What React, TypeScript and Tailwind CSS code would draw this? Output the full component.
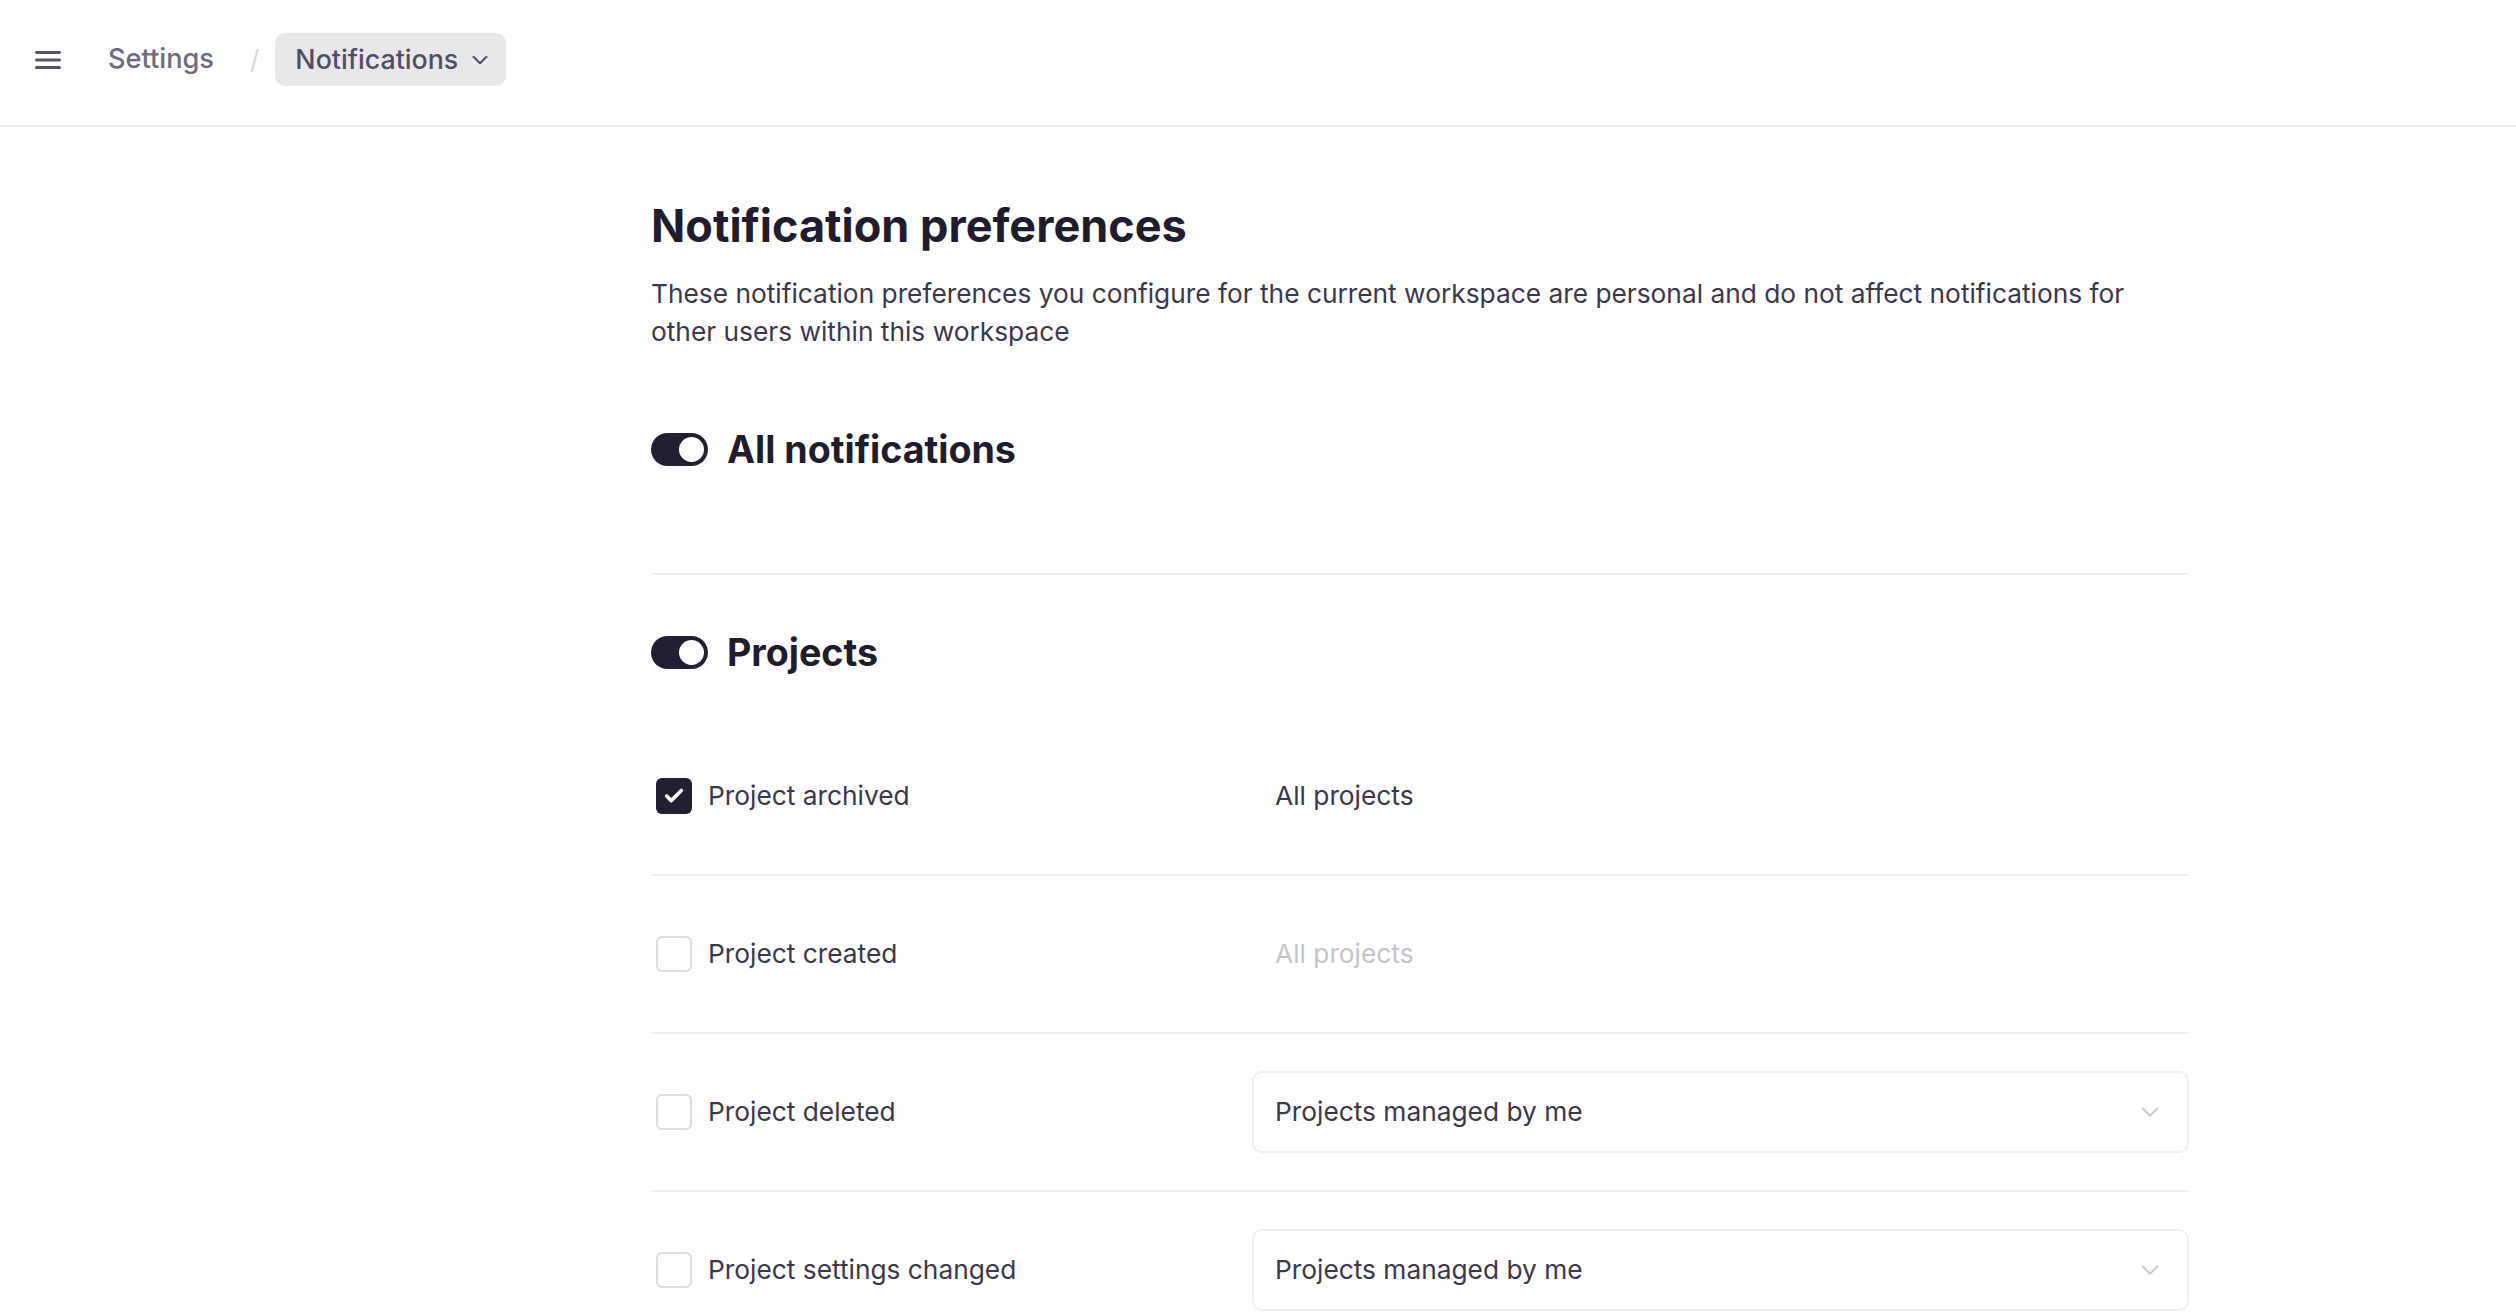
import { ChevronDown, Check } from 'lucide-react';

type Row = {
  label: string;
  checked: boolean;
  scope: string;
  kind: 'text' | 'muted' | 'select';
};

const rows: Row[] = [
  { label: 'Project archived', checked: true, scope: 'All projects', kind: 'text' },
  { label: 'Project created', checked: false, scope: 'All projects', kind: 'muted' },
  { label: 'Project deleted', checked: false, scope: 'Projects managed by me', kind: 'select' },
  { label: 'Project settings changed', checked: false, scope: 'Projects managed by me', kind: 'select' },
];

const Toggle = () => (
  <div className="relative w-[57px] h-[33px] rounded-full bg-[#221f33] shrink-0">
    <div className="absolute right-[4px] top-[4px] w-[25px] h-[25px] rounded-full bg-white" />
  </div>
);

const Checkbox = ({ checked }: { checked: boolean }) =>
  checked ? (
    <div className="ml-[5px] w-[36px] h-[36px] rounded-[6px] bg-[#221f33] flex items-center justify-center shrink-0">
      <Check className="w-[22px] h-[22px] text-white" strokeWidth={4} />
    </div>
  ) : (
    <div className="ml-[5px] w-[36px] h-[36px] rounded-[6px] border-2 border-[#dcdce1] bg-white shrink-0" />
  );

const App = () => {
  return (
    <div className="min-h-screen bg-white font-['Inter',sans-serif] text-[#221f33]">
      {/* Top bar */}
      <header className="h-[127px] border-b-2 border-[#f0f0f2] flex items-center pl-[35px] pb-[6px]">
        <svg width="26" height="20" viewBox="0 0 26 20" className="text-[#57536b]">
          <path d="M1.5 2.5h23M1.5 10h23M1.5 17.5h23" stroke="currentColor" strokeWidth="3" strokeLinecap="round" />
        </svg>
        <div className="ml-[27px] flex items-center gap-[16px]">
          <span className="px-[20px] h-[53px] flex items-center text-[27.2px] font-medium text-[#6e6a80]">Settings</span>
          <span className="text-[26px] text-[#d6d6db]">/</span>
          <span className="pl-[20px] pr-[13px] h-[53px] rounded-[10px] bg-[#e8e8eb] flex items-center gap-[9px] text-[26.8px] font-medium text-[#514d66]">
            Notifications
            <ChevronDown className="w-[26px] h-[26px]" strokeWidth={1.8} />
          </span>
        </div>
      </header>

      {/* Content */}
      <main className="ml-[651px] w-[1538px] pt-[71px]">
        <h1 className="text-[45px] leading-[56px] font-bold text-[#1f1c2e]">Notification preferences</h1>
        <p className="mt-[21px] text-[26.3px] leading-[38.4px] text-[#3b384d]">
          These notification preferences you configure for the current workspace are personal and do not affect notifications for other users within this workspace
        </p>

        <section className="mt-[74px] pb-[99px] border-b-2 border-[#f0f0f2]">
          <div className="flex items-center gap-[19px] h-[48px]">
            <Toggle />
            <h2 className="text-[37.6px] leading-[48px] font-bold text-[#1f1c2e]">All notifications</h2>
          </div>
        </section>

        <section className="mt-[54px]">
          <div className="flex items-center gap-[19px] h-[48px]">
            <Toggle />
            <h2 className="text-[37.6px] leading-[48px] font-bold text-[#1f1c2e]">Projects</h2>
          </div>

          <div className="mt-[41px]">
            {rows.map((row) => (
              <div key={row.label} className="flex items-center py-[37px] border-b-2 border-[#f0f0f2]">
                <div className="w-[601px] h-[82px] flex items-center gap-[16px]">
                  <Checkbox checked={row.checked} />
                  <span className="text-[26.3px] text-[#3b384d]">{row.label}</span>
                </div>
                <div className="flex-1 h-[82px] flex items-center">
                  {row.kind === 'select' ? (
                    <div className="w-full h-[82px] rounded-[10px] border-2 border-[#f0f0f2] flex items-center justify-between pl-[21px] pr-[22px]">
                      <span className="text-[26.3px] text-[#3b384d]">{row.scope}</span>
                      <ChevronDown className="w-[30px] h-[30px] text-[#c9c8d0]" strokeWidth={1.5} />
                    </div>
                  ) : (
                    <span
                      className={`pl-[23px] text-[26.3px] ${row.kind === 'muted' ? 'text-[#c4c3cc]' : 'text-[#3b384d]'}`}
                    >
                      {row.scope}
                    </span>
                  )}
                </div>
              </div>
            ))}
          </div>
        </section>
      </main>
    </div>
  );
};

export default App;
